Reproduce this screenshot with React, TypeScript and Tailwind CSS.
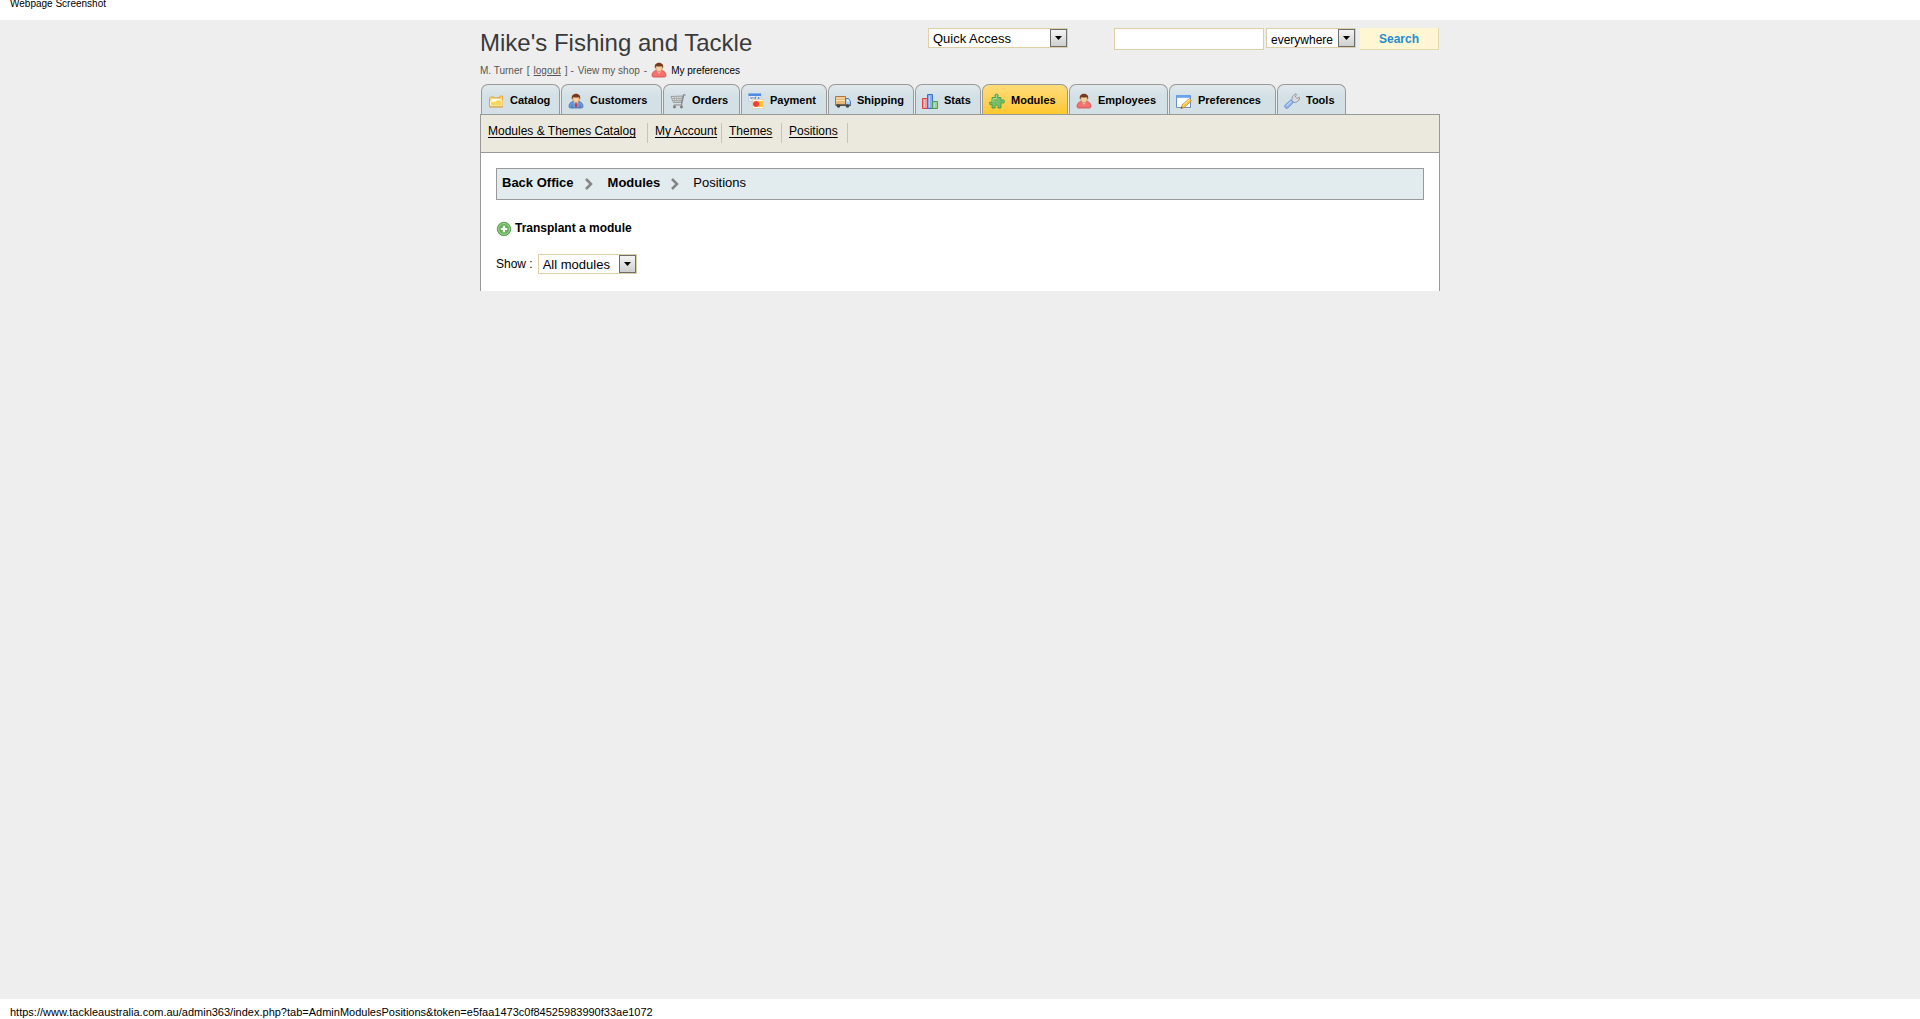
import type { ReactNode } from "react";

interface IconProps {
  children: ReactNode;
}

function Icon({ children }: IconProps) {
  return (
    <svg viewBox="0 0 16 16" className="size-4 shrink-0" aria-hidden="true">
      {children}
    </svg>
  );
}

function FolderIcon() {
  return (
    <Icon>
      <path d="M1.500 13.500V5.500l1-1.500h3.500l1 1 5-.5V3h2.500v10.500z" fill="#fbe08a" stroke="#e0a540" />
      <path d="M3 5.500h9v3H3z" fill="#fffbe6" stroke="#edcd7a" strokeWidth="0.8" />
      <path d="M2.500 13V8.500h5l1.500-1.500h5V13z" fill="#f9d65c" stroke="#fff6cc" />
      <path d="M1.500 14h13" stroke="#d9972f" />
    </Icon>
  );
}

function PersonIcon({ color, dark, tie }: { color: string; dark: string; tie?: boolean }) {
  return (
    <Icon>
      <path
        d="M5 8.500C2.500 9 1 11 1 13.500c0 .8.6 1.500 1.500 1.500h11c.9 0 1.500-.7 1.500-1.500C15 11 13.500 9 11 8.500z"
        fill={color}
        stroke={dark}
        strokeWidth="0.8"
      />
      <path d="M5.200 8.200h5.600L8 12z" fill={tie ? "#dce9fa" : "#ffb0aa"} />
      {tie && <path d="M7.400 9.500h1.200l.6 3.500L8 14.500 6.800 13z" fill="#d8343c" />}
      {tie && <path d="M4 11.500V15M12 11.500V15" stroke={dark} strokeWidth="0.8" />}
      <ellipse cx="8" cy="6" rx="3.300" ry="3.700" fill="#f7cfa0" stroke="#a9703d" strokeWidth="0.5" />
      <path
        d="M4 6.500C3 3 5 .8 8 .8s5 2.200 4 5.700c-.6-.8-.8-1.800-1-2.500-1.800.8-4 .8-6 0 0 .8-.3 1.700-1 2.500z"
        fill="#783a1b"
      />
    </Icon>
  );
}

function CartIcon() {
  return (
    <Icon>
      <path d="M1 3.500l12-.5-1.500 6.500H3.500z" fill="#dedede" stroke="#9c9c9c" />
      <path
        d="M1.500 5.500h11M2.500 7.500h9.500M4 3.500l1 6M6.500 3.500l.5 6M9 3.500v6M11.300 3.500l-.6 6"
        fill="none"
        stroke="#a3a3a3"
        strokeWidth="0.8"
      />
      <path d="M15.500 1.800h-1.800L11.500 12H4" fill="none" stroke="#858585" strokeWidth="1.200" />
      <path d="M3 12.500h9.500" stroke="#b5b5b5" />
      <circle cx="4.500" cy="14" r="1.400" fill="#777" />
      <circle cx="11.500" cy="14" r="1.400" fill="#777" />
    </Icon>
  );
}

function PaymentIcon() {
  return (
    <Icon>
      <path d="M.5.5h12.500v8H.5z" fill="#e3ebf8" stroke="#b9c8e2" strokeWidth="0.6" />
      <path d="M.5.5h12.500V3H.5z" fill="#4f8be0" />
      <path d="M2.500 4l1 2 1-2M6 4v2M8.500 4H7.500v2M10 6l.6-2 .6 2" fill="none" stroke="#5775ae" strokeWidth="0.8" />
      <path d="M4.500 6.500h11v9h-11z" fill="#fffbea" stroke="#d9c8a9" strokeWidth="0.7" />
      <path d="M10 8h5v6h-5z" fill="#f9c33c" />
      <circle cx="8" cy="11" r="3" fill="#ed403c" />
    </Icon>
  );
}

function TruckIcon() {
  return (
    <Icon>
      <path d="M.5 3.500h10v8H.5z" fill="#e8b878" stroke="#a9784a" />
      <path d="M1 5h9M1 7.500h9" stroke="#f9dfb6" />
      <path d="M10.500 5.500h3l2 3v4h-5z" fill="#a9cdf5" stroke="#4c79b4" />
      <path d="M12 6.500h1.300l1.200 2H12z" fill="#eef7ff" />
      <path d="M.5 11.500h15v1.500H.5z" fill="#555" />
      <circle cx="3.500" cy="13" r="1.800" fill="#444" />
      <circle cx="12.500" cy="13" r="1.800" fill="#444" />
    </Icon>
  );
}

function StatsIcon() {
  return (
    <Icon>
      <path d="M.5 5.500h5v10h-5z" fill="#f49a9a" stroke="#dc4348" />
      <path d="M5.500 1.500h5v14h-5z" fill="#85b1f3" stroke="#3a6fd3" />
      <path d="M10.500 8.500h5v7h-5z" fill="#9bd39a" stroke="#499f50" />
      <path d="M2.500 7v7M7.500 3v11M12.500 10v4" stroke="#fff" opacity="0.4" />
    </Icon>
  );
}

function PuzzleIcon() {
  return (
    <Icon>
      <path
        d="M3 4.500h3.500C5.300 2.500 6 1 7.500 1s2.200 1.500 1 3.500H12v3c2-1.200 3.500-.6 3.500 1s-1.500 2.200-3.500 1V15H8.800c.8-1.800.2-2.800-1.200-2.800S5.600 13.200 6.400 15H3v-3.700c-1.500 1-2.700.4-2.700-.9S1.600 8.600 3 9.500z"
        fill="#76bf68"
        stroke="#479c45"
        strokeWidth="0.9"
      />
      <path d="M4 5.500h3.500M7.500 2.200v2.500M4 6v3" stroke="#afe09d" strokeWidth="0.9" />
    </Icon>
  );
}

function PreferencesIcon() {
  return (
    <Icon>
      <path d="M.5 2.500h14v12H.5z" fill="#fbfdff" stroke="#6a91cf" />
      <path d="M.5 2h14v2.800H.5z" fill="#6ba0ea" />
      <path d="M5 15.500l1-3.500 7.500-6.500 2 2.300L8.200 14.500z" fill="#f7c648" stroke="#c7862c" strokeWidth="0.8" />
      <path d="M6.800 12.500l7-6" stroke="#fff0a8" />
      <path d="M5 15.500l.5-1.700 1.300 1.200z" fill="#503820" />
    </Icon>
  );
}

function WrenchIcon() {
  return (
    <Icon>
      <path
        d="M8 8.500C7.500 5.500 8.500 2 12 .8l.4.500-1 2.700 1.500 1.400L15.500 4.300l.3.600c-.5 3-3 4.700-5.600 4.500z"
        fill="#d8dadd"
        stroke="#888"
        strokeWidth="0.8"
      />
      <path
        d="M1.300 14.700c-1-1-.8-2 0-2.800L7 6.800l2.500 2.500-5.400 5.400c-.8.8-1.900.9-2.800 0z"
        fill="#96b6ee"
        stroke="#5c81cf"
        strokeWidth="0.8"
      />
      <path d="M2.500 12.800L7.300 8.200" stroke="#d5e3fb" />
    </Icon>
  );
}

function AddIcon() {
  return (
    <Icon>
      <circle cx="8" cy="8" r="6.700" fill="#67b259" stroke="#438d3d" strokeWidth="0.8" />
      <circle cx="8" cy="8" r="5.500" fill="none" stroke="#b5dda8" strokeWidth="0.8" />
      <path d="M8 4.800v6.400M4.800 8h6.400" stroke="#fff" strokeWidth="2.200" />
    </Icon>
  );
}

function Chevron() {
  return (
    <svg viewBox="0 0 8 12" className="mt-[3px] h-3 w-2 shrink-0" aria-hidden="true">
      <path d="M1 1l5 5-5 5" fill="none" stroke="#858585" strokeWidth="2.500" />
    </svg>
  );
}

interface SelectBoxProps {
  label: string;
  option: string;
  className: string;
}

function SelectBox({ label, option, className }: SelectBoxProps) {
  return (
    <span className="relative inline-flex">
      <select
        aria-label={label}
        className={`h-5 appearance-none border border-[#dfcfa9] bg-white pl-1 text-black ${className}`}
      >
        <option>{option}</option>
      </select>
      <span className="pointer-events-none absolute inset-y-px right-px flex w-[17px] items-center justify-center border border-[#6d6d6d] bg-linear-to-b from-[#f4f4f4] to-[#cfcfcf]">
        <svg viewBox="0 0 7 4" className="h-1 w-[7px]" aria-hidden="true">
          <path d="M0 0h7L3.500 4z" />
        </svg>
      </span>
    </span>
  );
}

const tabs = [
  { name: "Catalog", width: "w-[79px]", icon: <FolderIcon /> },
  { name: "Customers", width: "w-[101px]", icon: <PersonIcon color="#6d9bd8" dark="#3c6cab" tie /> },
  { name: "Orders", width: "w-[77px]", icon: <CartIcon /> },
  { name: "Payment", width: "w-[86px]", icon: <PaymentIcon /> },
  { name: "Shipping", width: "w-[86px]", icon: <TruckIcon /> },
  { name: "Stats", width: "w-[66px]", icon: <StatsIcon /> },
  { name: "Modules", width: "w-[86px]", icon: <PuzzleIcon />, active: true },
  { name: "Employees", width: "w-[99px]", icon: <PersonIcon color="#f5736e" dark="#cf4746" /> },
  { name: "Preferences", width: "w-[107px]", icon: <PreferencesIcon /> },
  { name: "Tools", width: "w-[69px]", icon: <WrenchIcon /> },
];

const subTabs = [
  { name: "Modules & Themes Catalog", width: "w-40" },
  { name: "My Account", width: "w-[67px]" },
  { name: "Themes", width: "w-[53px]" },
  { name: "Positions", width: "w-[59px]" },
];

function Header() {
  return (
    <header className="flex h-16 items-start justify-between">
      <div>
        <h1 className="mt-[9px] text-[24px] leading-7 text-[#3a3a3a]">Mike's Fishing and Tackle</h1>
        <div className="mt-[3px] flex h-5 items-center gap-1 text-[10px] text-[#555]">
          <span>M. Turner</span>
          <span>[</span>
          <a href="#" className="underline">logout</a>
          <span>] -</span>
          <a href="#">View my shop</a>
          <span>-</span>
          <a href="#" className="flex items-center gap-1 text-black">
            <PersonIcon color="#f5736e" dark="#cf4746" />
            My preferences
          </a>
        </div>
      </div>
      <div className="flex items-start pt-2">
        <SelectBox label="Quick Access" option="Quick Access" className="w-[140px] text-[13px]" />
        <form className="ml-[46px] flex items-start">
          <input
            type="text"
            aria-label="Search"
            className="h-[22px] w-[150px] border border-[#dfcfa9] bg-white px-1 text-[12px]"
          />
          <span className="mr-1 ml-0.5 flex">
            <SelectBox label="Search in" option="everywhere" className="w-[90px] pt-0.5 text-[12px]" />
          </span>
          <button
            type="button"
            className="mr-px h-[22px] w-[79px] border-r border-b border-[#e2d8a9] bg-[#fff6d3] text-[12px] font-bold text-[#268ccd]"
          >
            Search
          </button>
        </form>
      </div>
    </header>
  );
}

function Tabs() {
  return (
    <nav className="flex gap-px pl-px">
      {tabs.map((tab) => (
        <a
          key={tab.name}
          href="#"
          className={`flex h-[30px] items-center gap-1.5 rounded-t-[7px] border border-b-0 border-[#999] pt-0.5 pl-1.5 text-[11px] font-bold text-black ${tab.width} ${
            tab.active
              ? "bg-linear-to-b from-[#ffdc78] to-[#ffc82c]"
              : "bg-linear-to-b from-[#e1e9ec] to-[#d3e0e6] to-40%"
          }`}
        >
          {tab.icon}
          {tab.name}
        </a>
      ))}
    </nav>
  );
}

export default function App() {
  return (
    <div className="flex min-h-screen flex-col bg-white font-['Liberation_Sans',Arial,sans-serif] text-[12px] text-black">
      <div className="h-5 pl-2.5 text-[10px] leading-[7px]">Webpage Screenshot</div>
      <div className="flex-1 bg-[#eee]">
        <div className="mx-auto max-w-[960px]">
          <Header />
          <Tabs />
          <nav className="flex h-[39px] items-start gap-[7px] border border-[#999] bg-[#ebe9dd] pt-2 pl-[7px]">
            {subTabs.map((tab) => (
              <span key={tab.name} className={`flex h-5 border-r border-[#c4c4bb] ${tab.width}`}>
                <a href="#" className="leading-4 whitespace-nowrap underline underline-offset-2">
                  {tab.name}
                </a>
              </span>
            ))}
          </nav>
          <main className="border-x border-[#999] bg-white px-[15px] pt-[15px] pb-[17px]">
            <div className="flex h-8 border border-[#999] bg-[#e2ebee] pt-1.5 pl-[5px] text-[13px] leading-4">
              <a href="#" className="mr-[11px] font-bold">Back Office</a>
              <Chevron />
              <a href="#" className="mr-[11px] ml-[15px] font-bold">Modules</a>
              <Chevron />
              <span className="ml-3.5">Positions</span>
            </div>
            <a href="#" className="mt-5 flex w-fit gap-[3px] font-bold">
              <span className="pt-px">
                <AddIcon />
              </span>
              <span className="leading-4">Transplant a module</span>
            </a>
            <div className="mt-[17px] flex items-center gap-[5px]">
              <span>Show :</span>
              <SelectBox label="Show" option="All modules" className="w-[99px] text-[13px]" />
            </div>
          </main>
        </div>
      </div>
      <div className="h-5 pt-[7px] pl-2.5 text-[11px] leading-3">
        https://www.tackleaustralia.com.au/admin363/index.php?tab=AdminModulesPositions&amp;token=e5faa1473c0f84525983990f33ae1072
      </div>
    </div>
  );
}
